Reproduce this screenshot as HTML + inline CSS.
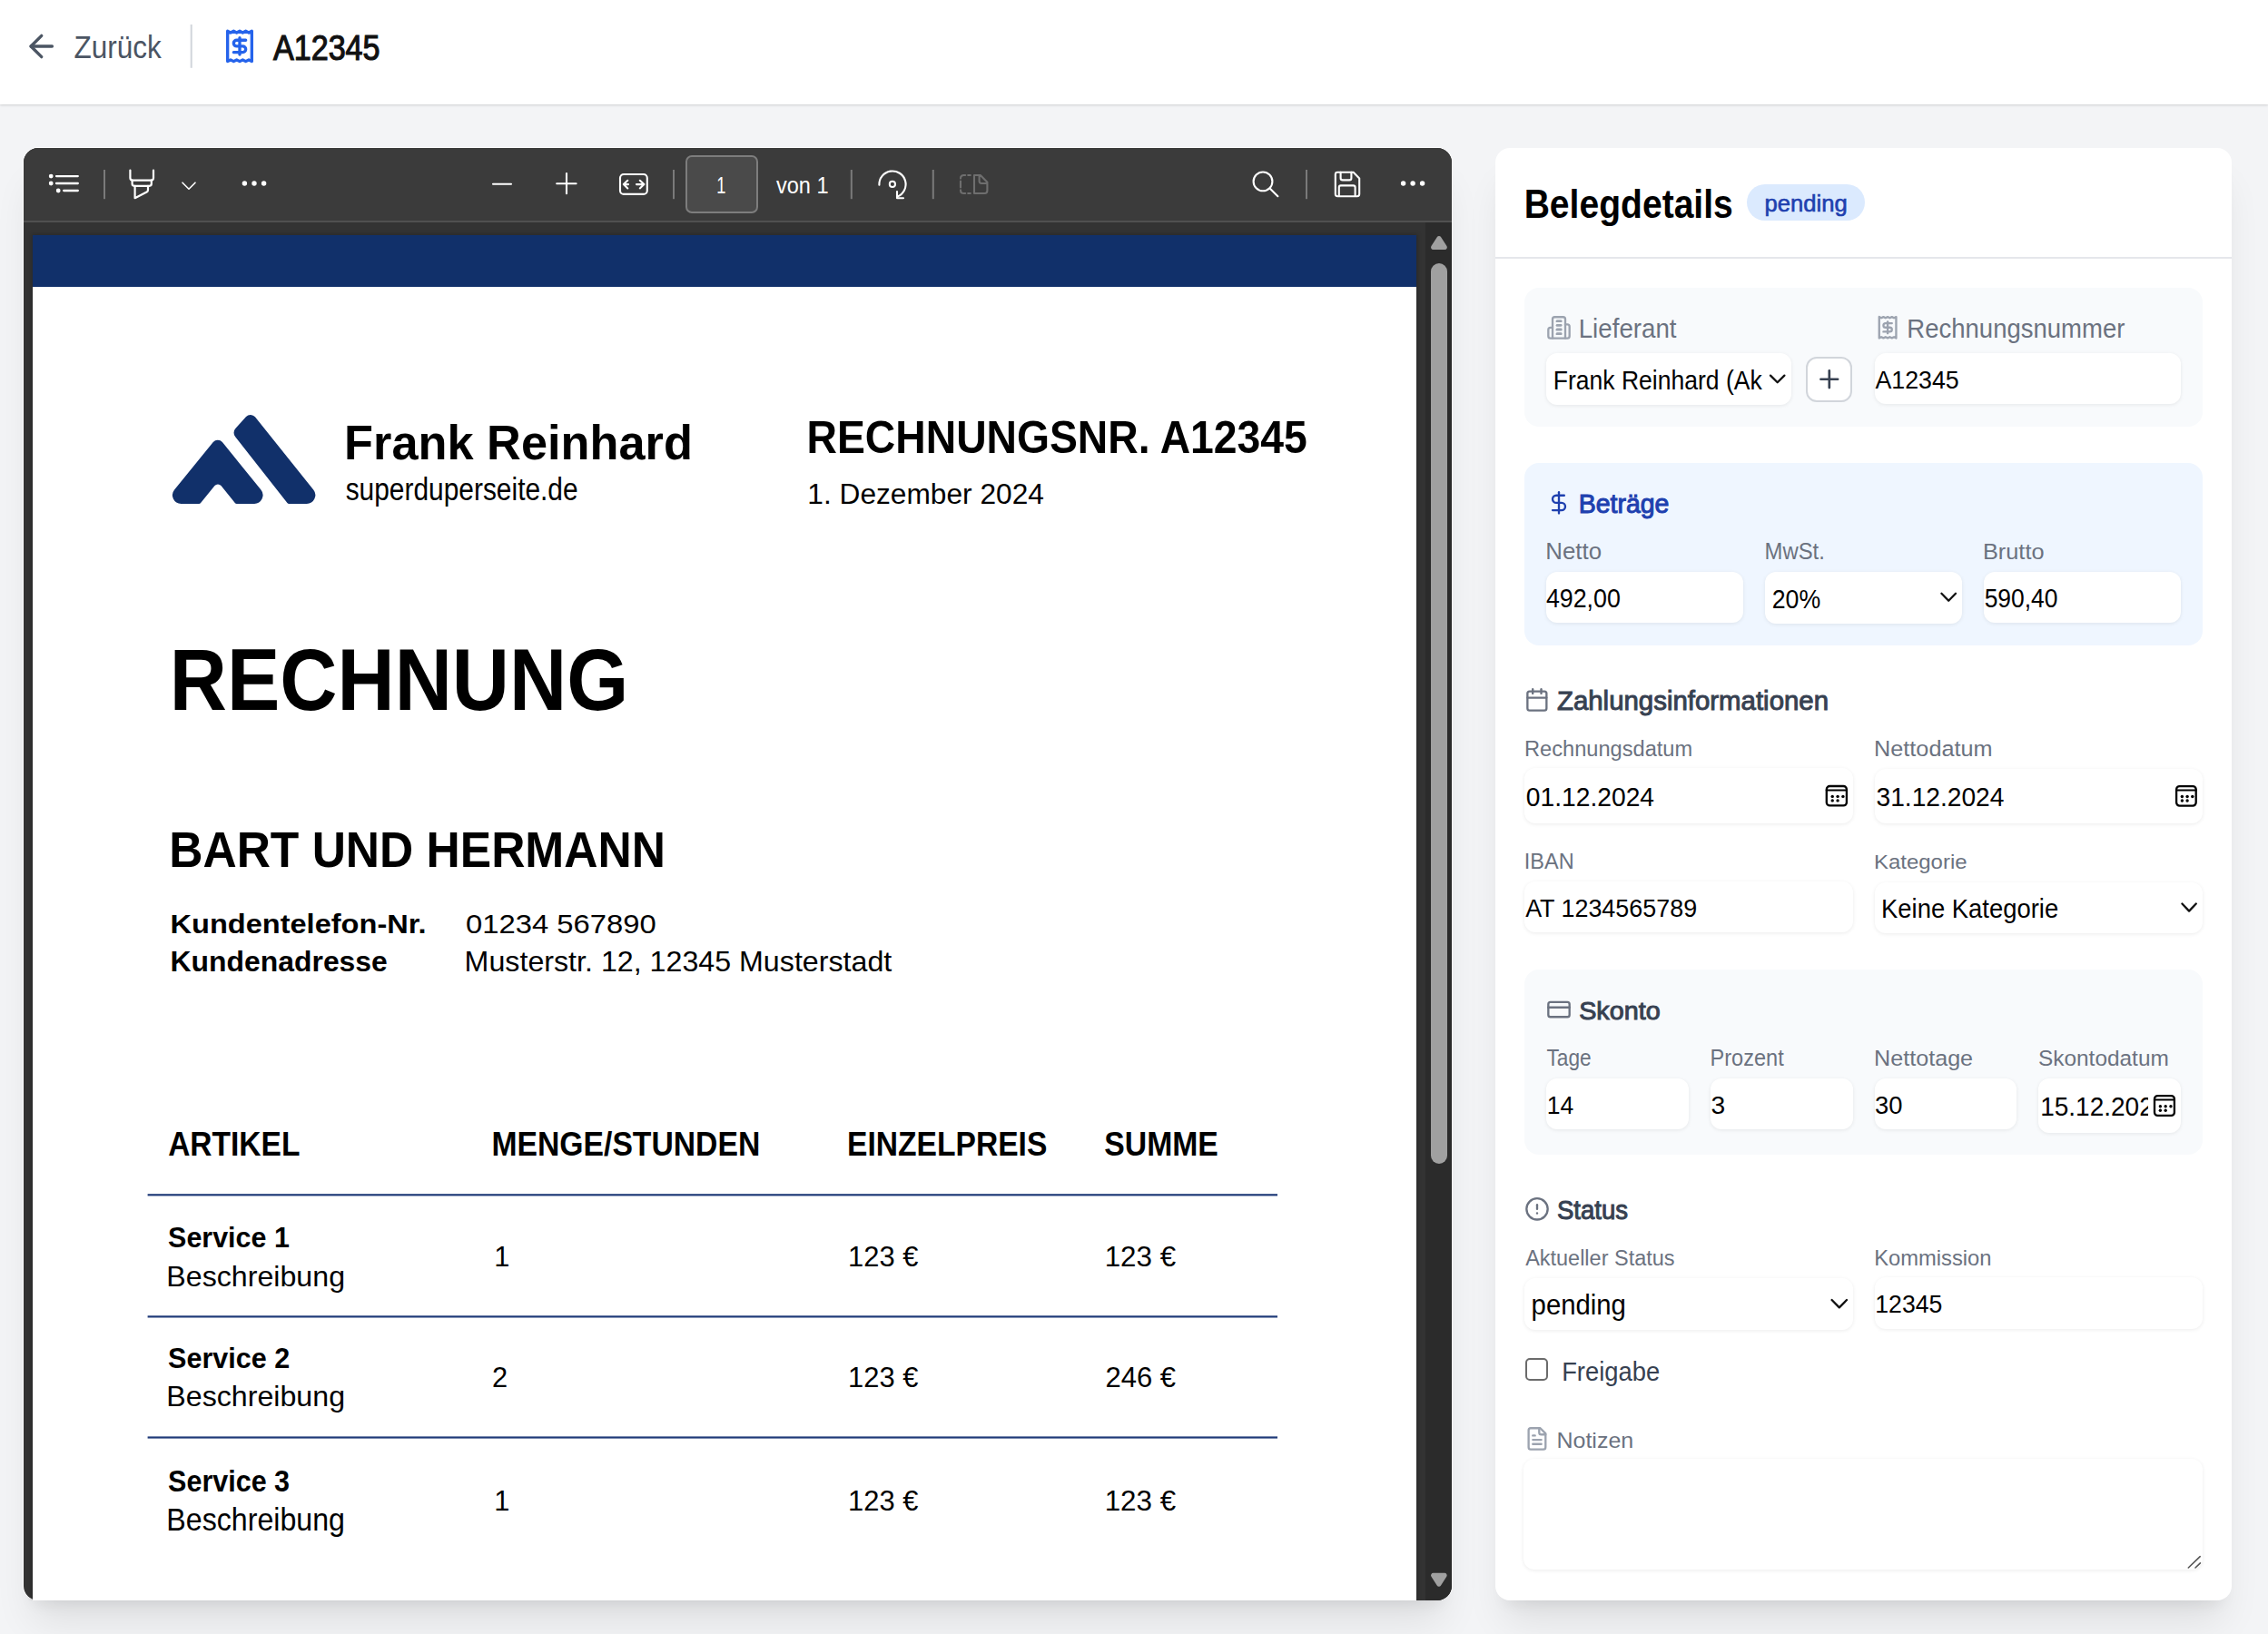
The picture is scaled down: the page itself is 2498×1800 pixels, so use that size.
<!DOCTYPE html>
<html><head><meta charset="utf-8"><title>A12345</title>
<style>
html,body{margin:0;padding:0;}
body{width:2498px;height:1800px;overflow:hidden;background:#f3f4f6;position:relative;font-family:"Liberation Sans", sans-serif;}
svg{position:absolute;left:0;top:0;}
text{font-family:"Liberation Sans", sans-serif;white-space:pre;}
</style></head><body>
<div style="position:absolute;left:0.0px;top:0.0px;width:2498.0px;height:115.0px;background:#fff;box-shadow:0 1px 3px rgba(0,0,0,0.10),0 1px 2px rgba(0,0,0,0.06);"></div>
<div style="position:absolute;left:26.0px;top:163.0px;width:1573.0px;height:1600.0px;background:#333;border-radius:16px;overflow:hidden;box-shadow:1px 0 0 0 #fff,-1px 0 0 0 #fff,0 -1px 0 0 #fff,0 32px 44px -10px rgba(0,0,0,0.09),0 14px 18px -12px rgba(0,0,0,0.09);"></div>
<div style="position:absolute;left:26.0px;top:163.0px;width:1573.0px;height:80.0px;background:#3b3b3b;border-radius:16px 16px 0 0;"></div>
<div style="position:absolute;left:26.0px;top:243.0px;width:1573.0px;height:2.0px;background:#505050;"></div>
<div style="position:absolute;left:36.0px;top:259.0px;width:1524.0px;height:1504.0px;background:#fff;box-shadow:0 0 5px 1px rgba(0,0,0,0.22);clip-path:inset(-12px -12px 0 -12px);"></div>
<div style="position:absolute;left:36.0px;top:259.0px;width:1524.0px;height:57.0px;background:#11306a;"></div>
<div style="position:absolute;left:1570.0px;top:245.0px;width:29.0px;height:1518.0px;background:#2b2b2b;border-bottom-right-radius:16px;"></div>
<div style="position:absolute;left:1576.0px;top:290.4px;width:18.0px;height:991.6px;background:#a0a0a0;border-radius:9px;"></div>
<div style="position:absolute;left:755.2px;top:171.2px;width:79.5px;height:63.6px;background:#4a4a4a;border:2px solid #7d7d7d;border-radius:7px;box-sizing:border-box;"></div>
<div style="position:absolute;left:1647.0px;top:163.0px;width:811.0px;height:1600.0px;background:#fff;border-radius:16px;box-shadow:0 32px 44px -10px rgba(0,0,0,0.09),0 14px 18px -12px rgba(0,0,0,0.09);"></div>
<div style="position:absolute;left:1924.0px;top:203.0px;width:129.5px;height:39.8px;background:#dbeafe;border-radius:20px;"></div>
<div style="position:absolute;left:1647.0px;top:282.7px;width:811.0px;height:2.0px;background:#e5e7eb;"></div>
<div style="position:absolute;left:1679.0px;top:317.0px;width:746.7px;height:152.6px;background:#f8fafc;border-radius:16px;"></div>
<div style="position:absolute;left:1703.0px;top:389.4px;width:270.0px;height:56.4px;background:#fff;border-radius:12px;box-shadow:0 1px 4px rgba(0,0,0,0.08);"></div>
<div style="position:absolute;left:1989.2px;top:392.5px;width:50.8px;height:50.7px;background:#fff;border:2px solid #d1d5db;border-radius:12px;box-sizing:border-box;"></div>
<div style="position:absolute;left:2065.0px;top:389.4px;width:336.8px;height:55.6px;background:#fff;border-radius:12px;box-shadow:0 1px 4px rgba(0,0,0,0.08);"></div>
<div style="position:absolute;left:1679.0px;top:509.7px;width:746.7px;height:201.1px;background:#eff6ff;border-radius:16px;"></div>
<div style="position:absolute;left:1703.0px;top:630.2px;width:217.0px;height:55.5px;background:#fff;border-radius:12px;box-shadow:0 1px 4px rgba(0,0,0,0.08);"></div>
<div style="position:absolute;left:1944.0px;top:630.0px;width:216.8px;height:56.6px;background:#fff;border-radius:12px;box-shadow:0 1px 4px rgba(0,0,0,0.08);"></div>
<div style="position:absolute;left:2185.0px;top:630.3px;width:216.8px;height:55.5px;background:#fff;border-radius:12px;box-shadow:0 1px 4px rgba(0,0,0,0.08);"></div>
<div style="position:absolute;left:1678.8px;top:846.3px;width:362.5px;height:60.4px;background:#fff;border-radius:12px;box-shadow:0 1px 4px rgba(0,0,0,0.08);"></div>
<div style="position:absolute;left:2065.0px;top:847.3px;width:360.7px;height:59.4px;background:#fff;border-radius:12px;box-shadow:0 1px 4px rgba(0,0,0,0.08);"></div>
<div style="position:absolute;left:1678.8px;top:971.1px;width:362.5px;height:55.6px;background:#fff;border-radius:12px;box-shadow:0 1px 4px rgba(0,0,0,0.08);"></div>
<div style="position:absolute;left:2065.0px;top:972.0px;width:360.7px;height:55.9px;background:#fff;border-radius:12px;box-shadow:0 1px 4px rgba(0,0,0,0.08);"></div>
<div style="position:absolute;left:1679.0px;top:1068.0px;width:746.7px;height:203.8px;background:#f8fafc;border-radius:16px;"></div>
<div style="position:absolute;left:1703.0px;top:1188.2px;width:157.0px;height:55.6px;background:#fff;border-radius:12px;box-shadow:0 1px 4px rgba(0,0,0,0.08);"></div>
<div style="position:absolute;left:1884.0px;top:1188.2px;width:157.3px;height:55.6px;background:#fff;border-radius:12px;box-shadow:0 1px 4px rgba(0,0,0,0.08);"></div>
<div style="position:absolute;left:2065.0px;top:1188.0px;width:155.7px;height:55.7px;background:#fff;border-radius:12px;box-shadow:0 1px 4px rgba(0,0,0,0.08);"></div>
<div style="position:absolute;left:2244.9px;top:1188.0px;width:156.9px;height:60.0px;background:#fff;border-radius:12px;box-shadow:0 1px 4px rgba(0,0,0,0.08);"></div>
<div style="position:absolute;left:1678.8px;top:1407.6px;width:362.5px;height:57.8px;background:#fff;border-radius:12px;box-shadow:0 1px 4px rgba(0,0,0,0.08);"></div>
<div style="position:absolute;left:2065.0px;top:1407.3px;width:360.7px;height:56.7px;background:#fff;border-radius:12px;box-shadow:0 1px 4px rgba(0,0,0,0.08);"></div>
<div style="position:absolute;left:1679.7px;top:1496.3px;width:25.0px;height:25.0px;background:#fff;border:2px solid #6b6b6b;border-radius:5px;box-sizing:border-box;"></div>
<div style="position:absolute;left:1678.0px;top:1607.0px;width:748.0px;height:122.0px;background:#fff;border-radius:12px;box-shadow:0 1px 4px rgba(0,0,0,0.08);"></div>
<svg width="2498" height="1800" viewBox="0 0 2498 1800">
<g transform="translate(25.75 31.00) scale(1.6667)" fill="none" stroke="#4b5563" stroke-width="2" stroke-linecap="round" stroke-linejoin="round"><path d="m12 19-7-7 7-7"/><path d="M19 12H5"/></g>
<text x="81.58" y="64.40" font-size="34.45" font-weight="normal" fill="#4b5563" textLength="96.26" lengthAdjust="spacingAndGlyphs">Zurück</text>
<rect x="209.70" y="27.00" width="2.00" height="47.80" rx="0" fill="#d1d5db" stroke="none" stroke-width="0"/>
<g transform="translate(244.00 30.95) scale(1.6667)" fill="none" stroke="#2563eb" stroke-width="2" stroke-linecap="round" stroke-linejoin="round"><path d="M4 2v20l2-1 2 1 2-1 2 1 2-1 2 1 2-1 2 1V2l-2 1-2-1-2 1-2-1-2 1-2-1-2 1Z"/><path d="M16 8h-6a2 2 0 1 0 0 4h4a2 2 0 1 1 0 4H8"/><path d="M12 17.5v-11"/></g>
<text x="300.91" y="65.90" font-size="38.52" font-weight="normal" fill="#111" textLength="117.66" lengthAdjust="spacingAndGlyphs" stroke="#111" stroke-width="1.2">A12345</text>
<path d="M1582.76 261.20 A2.60 2.60 0 0 1 1587.14 261.20 L1593.43 270.99 A2.60 2.60 0 0 1 1591.24 275.00 L1578.66 275.00 A2.60 2.60 0 0 1 1576.47 270.99 Z" fill="#a0a0a0"/>
<path d="M1576.44 1736.80 A2.60 2.60 0 0 1 1578.64 1732.80 L1591.06 1732.80 A2.60 2.60 0 0 1 1593.26 1736.80 L1587.04 1746.55 A2.60 2.60 0 0 1 1582.66 1746.55 Z" fill="#a0a0a0"/>
<circle cx="56.20" cy="194.10" r="2.40" fill="#fff" stroke="none" stroke-width="0"/>
<circle cx="56.20" cy="202.00" r="2.40" fill="#fff" stroke="none" stroke-width="0"/>
<circle cx="64.20" cy="210.00" r="2.40" fill="#fff" stroke="none" stroke-width="0"/>
<path d="M62 194.1 H85.8 M62 202 H85.8 M70.2 210 H85.8" stroke="#ffffff" stroke-width="2.3" fill="none" stroke-linecap="round" stroke-linejoin="round" stroke-linecap="butt"/>
<rect x="114.00" y="187.00" width="2.00" height="32.20" rx="0" fill="#7a7a7a" stroke="none" stroke-width="0"/>
<rect x="741.00" y="187.00" width="2.00" height="32.20" rx="0" fill="#7a7a7a" stroke="none" stroke-width="0"/>
<rect x="936.80" y="187.00" width="2.00" height="32.20" rx="0" fill="#7a7a7a" stroke="none" stroke-width="0"/>
<rect x="1026.80" y="187.00" width="2.00" height="32.20" rx="0" fill="#7a7a7a" stroke="none" stroke-width="0"/>
<rect x="1438.00" y="187.00" width="2.00" height="32.20" rx="0" fill="#7a7a7a" stroke="none" stroke-width="0"/>
<path d="M143.4 187.5 V196 Q143.4 198.6 146 198.6 H166.4 Q169 198.6 169 196 V187.5" stroke="#ffffff" stroke-width="2.2" fill="none" stroke-linecap="round" stroke-linejoin="round"/>
<path d="M145.6 198.6 V202.6 Q145.6 204.8 147.8 204.8 H164.6 Q166.8 204.8 166.8 202.6 V198.6" stroke="#ffffff" stroke-width="2.2" fill="none" stroke-linecap="round" stroke-linejoin="round"/>
<path d="M148.6 204.8 V218.2 L161.6 211.6 Q163 210.8 163 209.2 V204.8" stroke="#ffffff" stroke-width="2.2" fill="none" stroke-linecap="round" stroke-linejoin="round"/>
<path d="M201 201.2 L208 208.2 L215 201.2" stroke="#ffffff" stroke-width="1.6" fill="none" stroke-linecap="round" stroke-linejoin="round"/>
<circle cx="269.40" cy="202.00" r="2.70" fill="#fff" stroke="none" stroke-width="0"/>
<circle cx="280.00" cy="202.00" r="2.70" fill="#fff" stroke="none" stroke-width="0"/>
<circle cx="290.60" cy="202.00" r="2.70" fill="#fff" stroke="none" stroke-width="0"/>
<path d="M543 202.7 H563" stroke="#ffffff" stroke-width="2.1" fill="none" stroke-linecap="round" stroke-linejoin="round" stroke-linecap="butt"/>
<path d="M613.2 202.2 H634.6 M624 191 V213.2" stroke="#ffffff" stroke-width="2.1" fill="none" stroke-linecap="round" stroke-linejoin="round" stroke-linecap="butt"/>
<rect x="683.00" y="192.00" width="29.80" height="21.90" rx="4" fill="none" stroke="#ffffff" stroke-width="2.1"/>
<path d="M692 203.1 H686.8 M691.3 198.8 L686.8 203.1 L691.3 207.4" stroke="#ffffff" stroke-width="2.1" fill="none" stroke-linecap="round" stroke-linejoin="round"/>
<path d="M701 203.1 H709.4 M704.8 198.8 L709.4 203.1 L704.8 207.4" stroke="#ffffff" stroke-width="2.1" fill="none" stroke-linecap="round" stroke-linejoin="round"/>
<text x="789.13" y="213.30" font-size="25.15" font-weight="normal" fill="#fff" textLength="10.16" lengthAdjust="spacingAndGlyphs">1</text>
<text x="854.94" y="213.00" font-size="25.44" font-weight="normal" fill="#fff" textLength="57.61" lengthAdjust="spacingAndGlyphs">von 1</text>
<path d="M968.4 203.8 A14.6 14.6 0 1 1 988.4 216.6" stroke="#ffffff" stroke-width="2.1" fill="none" stroke-linecap="round" stroke-linejoin="round"/>
<path d="M995 218.3 H988 V211" stroke="#ffffff" stroke-width="2.1" fill="none" stroke-linecap="round" stroke-linejoin="round" stroke-linecap="butt" stroke-linejoin="miter"/>
<circle cx="982.90" cy="202.90" r="3.10" fill="none" stroke="#ffffff" stroke-width="2"/>
<path d="M1058 196.6 Q1058 193 1061.6 193 H1063.2 M1066.2 193 H1068.8 M1058 199.6 V206.4 M1058 209.4 Q1058 213 1061.6 213 H1063.2 M1066.2 213 H1068.8" stroke="#6e6e6e" stroke-width="2.1" fill="none" stroke-linecap="round" stroke-linejoin="round" stroke-linecap="butt"/>
<path d="M1073 193 H1079.8 L1087.4 200.8 V210 Q1087.4 213 1084.4 213 H1073 Z M1078.6 193 V199.6 Q1078.6 202 1081 202 H1087.4" stroke="#6e6e6e" stroke-width="2.1" fill="none" stroke-linecap="round" stroke-linejoin="round"/>
<circle cx="1391.00" cy="199.90" r="10.40" fill="none" stroke="#ffffff" stroke-width="2.1"/>
<path d="M1398.6 207.4 L1407.4 216.2" stroke="#ffffff" stroke-width="2.1" fill="none" stroke-linecap="round" stroke-linejoin="round"/>
<path d="M1473.2 189.8 H1490.6 L1497.2 196.4 V213.8 Q1497.2 216.2 1494.8 216.2 H1473.2 Q1470.8 216.2 1470.8 213.8 V192.2 Q1470.8 189.8 1473.2 189.8 Z" stroke="#ffffff" stroke-width="2.1" fill="none" stroke-linecap="round" stroke-linejoin="round"/>
<path d="M1476.6 189.8 V196.2 Q1476.6 198.4 1478.8 198.4 H1486.2 Q1488.4 198.4 1488.4 196.2 V189.8" stroke="#ffffff" stroke-width="2.1" fill="none" stroke-linecap="round" stroke-linejoin="round"/>
<path d="M1474.8 216 V206.4 Q1474.8 204.4 1476.8 204.4 H1490.6 Q1492.6 204.4 1492.6 206.4 V216" stroke="#ffffff" stroke-width="2.1" fill="none" stroke-linecap="round" stroke-linejoin="round"/>
<circle cx="1545.60" cy="202.00" r="2.70" fill="#fff" stroke="none" stroke-width="0"/>
<circle cx="1556.10" cy="202.00" r="2.70" fill="#fff" stroke="none" stroke-width="0"/>
<circle cx="1566.60" cy="202.00" r="2.70" fill="#fff" stroke="none" stroke-width="0"/>
<path d="M234.79 487.07 A6.50 6.50 0 0 1 244.87 487.09 L287.40 539.57 A9.42 9.42 0 0 1 280.09 554.92 L260.72 554.92 A2.50 2.50 0 0 1 258.77 553.99 L243.48 535.10 A4.50 4.50 0 0 0 236.50 535.09 L221.07 554.00 A2.50 2.50 0 0 1 219.13 554.92 L199.47 554.92 A9.51 9.51 0 0 1 192.10 539.40 Z" fill="#11306a"/>
<path d="M259.05 481.07 A7.00 7.00 0 0 1 259.35 472.05 L271.07 459.08 A6.50 6.50 0 0 1 280.97 459.37 L345.21 539.45 A9.52 9.52 0 0 1 337.79 554.92 L318.36 554.92 A2.50 2.50 0 0 1 316.39 553.97 Z" fill="#11306a"/>
<text x="379.07" y="506.20" font-size="53.20" font-weight="bold" fill="#000" textLength="383.85" lengthAdjust="spacingAndGlyphs">Frank Reinhard</text>
<text x="380.68" y="551.30" font-size="34.26" font-weight="normal" fill="#000" textLength="255.95" lengthAdjust="spacingAndGlyphs">superduperseite.de</text>
<text x="888.58" y="498.80" font-size="49.86" font-weight="bold" fill="#000" textLength="551.24" lengthAdjust="spacingAndGlyphs">RECHNUNGSNR. A12345</text>
<text x="889.32" y="555.20" font-size="30.81" font-weight="normal" fill="#000" textLength="260.62" lengthAdjust="spacingAndGlyphs">1. Dezember 2024</text>
<text x="186.79" y="782.00" font-size="96.51" font-weight="bold" fill="#000" textLength="505.51" lengthAdjust="spacingAndGlyphs">RECHNUNG</text>
<text x="186.22" y="955.40" font-size="54.80" font-weight="bold" fill="#000" textLength="546.69" lengthAdjust="spacingAndGlyphs">BART UND HERMANN</text>
<text x="187.50" y="1027.60" font-size="29.94" font-weight="bold" fill="#000" textLength="282.17" lengthAdjust="spacingAndGlyphs">Kundentelefon-Nr.</text>
<text x="512.99" y="1027.60" font-size="29.94" font-weight="normal" fill="#000" textLength="209.66" lengthAdjust="spacingAndGlyphs">01234 567890</text>
<text x="187.55" y="1069.70" font-size="30.52" font-weight="bold" fill="#000" textLength="239.30" lengthAdjust="spacingAndGlyphs">Kundenadresse</text>
<text x="511.64" y="1069.70" font-size="30.52" font-weight="normal" fill="#000" textLength="470.63" lengthAdjust="spacingAndGlyphs">Musterstr. 12, 12345 Musterstadt</text>
<text x="185.16" y="1272.70" font-size="36.63" font-weight="bold" fill="#000" textLength="145.26" lengthAdjust="spacingAndGlyphs">ARTIKEL</text>
<text x="541.53" y="1272.70" font-size="36.63" font-weight="bold" fill="#000" textLength="295.70" lengthAdjust="spacingAndGlyphs">MENGE/STUNDEN</text>
<text x="933.03" y="1272.70" font-size="36.63" font-weight="bold" fill="#000" textLength="220.29" lengthAdjust="spacingAndGlyphs">EINZELPREIS</text>
<text x="1216.29" y="1272.70" font-size="36.63" font-weight="bold" fill="#000" textLength="125.55" lengthAdjust="spacingAndGlyphs">SUMME</text>
<rect x="162.60" y="1315.20" width="1244.40" height="2.20" rx="0" fill="#1f3a78" stroke="none" stroke-width="0"/>
<rect x="162.60" y="1449.30" width="1244.40" height="2.20" rx="0" fill="#1f3a78" stroke="none" stroke-width="0"/>
<rect x="162.60" y="1582.40" width="1244.40" height="2.20" rx="0" fill="#1f3a78" stroke="none" stroke-width="0"/>
<text x="185.09" y="1373.60" font-size="31.69" font-weight="bold" fill="#000" textLength="133.76" lengthAdjust="spacingAndGlyphs">Service 1</text>
<text x="183.35" y="1416.60" font-size="31.69" font-weight="normal" fill="#000" textLength="196.68" lengthAdjust="spacingAndGlyphs">Beschreibung</text>
<text x="544.29" y="1394.80" font-size="30.81" font-weight="normal" fill="#000" textLength="17.14" lengthAdjust="spacingAndGlyphs">1</text>
<text x="934.08" y="1394.80" font-size="30.81" font-weight="normal" fill="#000" textLength="77.30" lengthAdjust="spacingAndGlyphs">123 €</text>
<text x="1216.65" y="1394.80" font-size="30.81" font-weight="normal" fill="#000" textLength="78.44" lengthAdjust="spacingAndGlyphs">123 €</text>
<text x="185.08" y="1507.10" font-size="31.40" font-weight="bold" fill="#000" textLength="134.07" lengthAdjust="spacingAndGlyphs">Service 2</text>
<text x="183.35" y="1549.40" font-size="32.27" font-weight="normal" fill="#000" textLength="196.68" lengthAdjust="spacingAndGlyphs">Beschreibung</text>
<text x="541.96" y="1528.05" font-size="30.81" font-weight="normal" fill="#000" textLength="17.14" lengthAdjust="spacingAndGlyphs">2</text>
<text x="934.08" y="1528.05" font-size="30.81" font-weight="normal" fill="#000" textLength="77.30" lengthAdjust="spacingAndGlyphs">123 €</text>
<text x="1217.45" y="1528.05" font-size="30.81" font-weight="normal" fill="#000" textLength="77.64" lengthAdjust="spacingAndGlyphs">246 €</text>
<text x="185.08" y="1642.90" font-size="32.70" font-weight="bold" fill="#000" textLength="133.99" lengthAdjust="spacingAndGlyphs">Service 3</text>
<text x="183.35" y="1686.10" font-size="34.59" font-weight="normal" fill="#000" textLength="196.68" lengthAdjust="spacingAndGlyphs">Beschreibung</text>
<text x="544.29" y="1663.85" font-size="30.81" font-weight="normal" fill="#000" textLength="17.14" lengthAdjust="spacingAndGlyphs">1</text>
<text x="934.08" y="1663.85" font-size="30.81" font-weight="normal" fill="#000" textLength="77.30" lengthAdjust="spacingAndGlyphs">123 €</text>
<text x="1216.65" y="1663.85" font-size="30.81" font-weight="normal" fill="#000" textLength="78.44" lengthAdjust="spacingAndGlyphs">123 €</text>
<text x="1678.66" y="239.60" font-size="43.90" font-weight="bold" fill="#000" textLength="230.15" lengthAdjust="spacingAndGlyphs">Belegdetails</text>
<text x="1943.54" y="233.00" font-size="25.36" font-weight="normal" fill="#1e40af" textLength="91.11" lengthAdjust="spacingAndGlyphs" stroke="#1e40af" stroke-width="0.6">pending</text>
<g transform="translate(1703.00 346.90) scale(1.1667)" fill="none" stroke="#9ca3af" stroke-width="2" stroke-linecap="round" stroke-linejoin="round"><path d="M6 22V4a2 2 0 0 1 2-2h8a2 2 0 0 1 2 2v18Z"/><path d="M6 12H4a2 2 0 0 0-2 2v6a2 2 0 0 0 2 2h2"/><path d="M18 9h2a2 2 0 0 1 2 2v9a2 2 0 0 1-2 2h-2"/><path d="M10 6h4"/><path d="M10 10h4"/><path d="M10 14h4"/><path d="M10 18h4"/></g>
<path d="M1715 353.6 H1719.4 M1715 358 H1719.4 M1715 362.6 H1719.4 M1715 367.2 H1719.4" stroke="#9ca3af" stroke-width="2" fill="none" stroke-linecap="round" stroke-linejoin="round"/>
<text x="1738.71" y="372.00" font-size="29.94" font-weight="normal" fill="#6b7280" textLength="107.87" lengthAdjust="spacingAndGlyphs">Lieferant</text>
<text x="1710.71" y="429.00" font-size="29.36" font-weight="normal" fill="#000" textLength="229.99" lengthAdjust="spacingAndGlyphs">Frank Reinhard (Ak</text>
<path d="M1950 413.6 L1957.7 421.3 L1965.4 413.6" stroke="#111" stroke-width="2.3" fill="none" stroke-linecap="round" stroke-linejoin="round"/>
<g transform="translate(1998.80 401.75) scale(1.3333)" fill="none" stroke="#374151" stroke-width="2" stroke-linecap="round" stroke-linejoin="round"><path d="M5 12h14"/><path d="M12 5v14"/></g>
<g transform="translate(2065.10 346.75) scale(1.1667)" fill="none" stroke="#9ca3af" stroke-width="2" stroke-linecap="round" stroke-linejoin="round"><path d="M4 2v20l2-1 2 1 2-1 2 1 2-1 2 1 2-1 2 1V2l-2 1-2-1-2 1-2-1-2 1-2-1-2 1Z"/><path d="M16 8h-6a2 2 0 1 0 0 4h4a2 2 0 1 1 0 4H8"/><path d="M12 17.5v-11"/></g>
<text x="2100.33" y="372.00" font-size="29.94" font-weight="normal" fill="#6b7280" textLength="240.06" lengthAdjust="spacingAndGlyphs">Rechnungsnummer</text>
<text x="2065.43" y="427.80" font-size="27.62" font-weight="normal" fill="#000" textLength="92.35" lengthAdjust="spacingAndGlyphs">A12345</text>
<g transform="translate(1703.00 539.90) scale(1.1667)" fill="none" stroke="#1e40af" stroke-width="2" stroke-linecap="round" stroke-linejoin="round"><line x1="12" x2="12" y1="2" y2="22"/><path d="M17 5H9.5a3.5 3.5 0 0 0 0 7h5a3.5 3.5 0 0 1 0 7H6"/></g>
<text x="1738.65" y="565.30" font-size="28.78" font-weight="normal" fill="#1e40af" textLength="99.76" lengthAdjust="spacingAndGlyphs" stroke="#1e40af" stroke-width="1.0">Beträge</text>
<text x="1702.27" y="616.00" font-size="25.00" font-weight="normal" fill="#6b7280" textLength="61.77" lengthAdjust="spacingAndGlyphs">Netto</text>
<text x="1943.53" y="616.00" font-size="25.00" font-weight="normal" fill="#6b7280" textLength="66.33" lengthAdjust="spacingAndGlyphs">MwSt.</text>
<text x="2183.91" y="616.20" font-size="24.42" font-weight="normal" fill="#6b7280" textLength="67.62" lengthAdjust="spacingAndGlyphs">Brutto</text>
<text x="1702.90" y="669.00" font-size="29.07" font-weight="normal" fill="#000" textLength="81.94" lengthAdjust="spacingAndGlyphs">492,00</text>
<text x="1951.66" y="669.70" font-size="28.63" font-weight="normal" fill="#000" textLength="53.51" lengthAdjust="spacingAndGlyphs">20%</text>
<path d="M2138.4 653.8 L2146.2 661.8 L2154 653.8" stroke="#111" stroke-width="2.3" fill="none" stroke-linecap="round" stroke-linejoin="round"/>
<text x="2185.64" y="668.70" font-size="28.92" font-weight="normal" fill="#000" textLength="80.88" lengthAdjust="spacingAndGlyphs">590,40</text>
<g transform="translate(1678.85 756.90) scale(1.1667)" fill="none" stroke="#6b7280" stroke-width="2" stroke-linecap="round" stroke-linejoin="round"><path d="M8 2v4"/><path d="M16 2v4"/><rect width="18" height="18" x="3" y="4" rx="2"/><path d="M3 10h18"/></g>
<text x="1714.94" y="782.30" font-size="30.23" font-weight="normal" fill="#374151" textLength="299.11" lengthAdjust="spacingAndGlyphs" stroke="#374151" stroke-width="1.0">Zahlungsinformationen</text>
<text x="1679.05" y="832.60" font-size="24.42" font-weight="normal" fill="#6b7280" textLength="185.11" lengthAdjust="spacingAndGlyphs">Rechnungsdatum</text>
<text x="2064.12" y="833.00" font-size="23.55" font-weight="normal" fill="#6b7280" textLength="130.41" lengthAdjust="spacingAndGlyphs">Nettodatum</text>
<rect x="2011.80" y="866.00" width="22.10" height="21.40" rx="3.5" fill="none" stroke="#000" stroke-width="2.3"/>
<path d="M2011.70 870.50 H2034.00" stroke="#000" stroke-width="2" fill="none" stroke-linecap="round" stroke-linejoin="round"/>
<circle cx="2018.23" cy="877.41" r="1.70" fill="#000" stroke="none" stroke-width="0"/>
<circle cx="2024.07" cy="877.41" r="1.70" fill="#000" stroke="none" stroke-width="0"/>
<circle cx="2029.90" cy="877.41" r="1.70" fill="#000" stroke="none" stroke-width="0"/>
<circle cx="2018.23" cy="881.89" r="1.70" fill="#000" stroke="none" stroke-width="0"/>
<circle cx="2024.07" cy="881.89" r="1.70" fill="#000" stroke="none" stroke-width="0"/>
<rect x="2397.10" y="866.10" width="21.60" height="21.50" rx="3.5" fill="none" stroke="#000" stroke-width="2.3"/>
<path d="M2397.00 870.60 H2418.80" stroke="#000" stroke-width="2" fill="none" stroke-linecap="round" stroke-linejoin="round"/>
<circle cx="2403.38" cy="877.56" r="1.70" fill="#000" stroke="none" stroke-width="0"/>
<circle cx="2409.09" cy="877.56" r="1.70" fill="#000" stroke="none" stroke-width="0"/>
<circle cx="2414.80" cy="877.56" r="1.70" fill="#000" stroke="none" stroke-width="0"/>
<circle cx="2403.38" cy="882.06" r="1.70" fill="#000" stroke="none" stroke-width="0"/>
<circle cx="2409.09" cy="882.06" r="1.70" fill="#000" stroke="none" stroke-width="0"/>
<text x="1680.87" y="887.80" font-size="28.92" font-weight="normal" fill="#000" textLength="141.21" lengthAdjust="spacingAndGlyphs">01.12.2024</text>
<text x="2066.54" y="887.70" font-size="28.63" font-weight="normal" fill="#000" textLength="140.83" lengthAdjust="spacingAndGlyphs">31.12.2024</text>
<text x="1678.83" y="957.00" font-size="24.27" font-weight="normal" fill="#6b7280" textLength="54.78" lengthAdjust="spacingAndGlyphs">IBAN</text>
<text x="2064.02" y="956.60" font-size="22.67" font-weight="normal" fill="#6b7280" textLength="102.51" lengthAdjust="spacingAndGlyphs">Kategorie</text>
<text x="1680.13" y="1010.00" font-size="28.34" font-weight="normal" fill="#000" textLength="188.98" lengthAdjust="spacingAndGlyphs">AT 1234565789</text>
<text x="2072.04" y="1010.80" font-size="29.07" font-weight="normal" fill="#000" textLength="195.17" lengthAdjust="spacingAndGlyphs">Keine Kategorie</text>
<path d="M2403.4 995.5 L2411.1 1003.6 L2418.8 995.5" stroke="#111" stroke-width="2.3" fill="none" stroke-linecap="round" stroke-linejoin="round"/>
<g transform="translate(1703.00 1098.05) scale(1.1667)" fill="none" stroke="#6b7280" stroke-width="2" stroke-linecap="round" stroke-linejoin="round"><rect width="20" height="14" x="2" y="5" rx="2"/><line x1="2" x2="22" y1="10" y2="10"/></g>
<text x="1739.21" y="1122.60" font-size="28.20" font-weight="normal" fill="#374151" textLength="89.47" lengthAdjust="spacingAndGlyphs" stroke="#374151" stroke-width="1.0">Skonto</text>
<text x="1703.49" y="1174.10" font-size="24.86" font-weight="normal" fill="#6b7280" textLength="49.20" lengthAdjust="spacingAndGlyphs">Tage</text>
<text x="1883.56" y="1174.10" font-size="24.86" font-weight="normal" fill="#6b7280" textLength="81.15" lengthAdjust="spacingAndGlyphs">Prozent</text>
<text x="2064.13" y="1173.50" font-size="23.84" font-weight="normal" fill="#6b7280" textLength="108.98" lengthAdjust="spacingAndGlyphs">Nettotage</text>
<text x="2245.00" y="1173.50" font-size="23.84" font-weight="normal" fill="#6b7280" textLength="143.79" lengthAdjust="spacingAndGlyphs">Skontodatum</text>
<text x="1703.81" y="1226.70" font-size="28.20" font-weight="normal" fill="#000" textLength="29.48" lengthAdjust="spacingAndGlyphs">14</text>
<text x="1884.44" y="1226.70" font-size="28.20" font-weight="normal" fill="#000" textLength="15.68" lengthAdjust="spacingAndGlyphs">3</text>
<text x="2064.97" y="1227.00" font-size="27.62" font-weight="normal" fill="#000" textLength="30.41" lengthAdjust="spacingAndGlyphs">30</text>
<clipPath id="clipsk"><rect x="2244" y="1188" width="122" height="60"/></clipPath>
<text x="2247.20" y="1229.00" font-size="28.63" font-weight="normal" fill="#000" textLength="140.08" lengthAdjust="spacingAndGlyphs" clip-path="url(#clipsk)">15.12.2024</text>
<rect x="2373.00" y="1207.10" width="21.90" height="21.80" rx="3.5" fill="none" stroke="#000" stroke-width="2.3"/>
<path d="M2372.90 1211.60 H2395.00" stroke="#000" stroke-width="2" fill="none" stroke-linecap="round" stroke-linejoin="round"/>
<circle cx="2379.37" cy="1218.72" r="1.70" fill="#000" stroke="none" stroke-width="0"/>
<circle cx="2385.16" cy="1218.72" r="1.70" fill="#000" stroke="none" stroke-width="0"/>
<circle cx="2390.94" cy="1218.72" r="1.70" fill="#000" stroke="none" stroke-width="0"/>
<circle cx="2379.37" cy="1223.28" r="1.70" fill="#000" stroke="none" stroke-width="0"/>
<circle cx="2385.16" cy="1223.28" r="1.70" fill="#000" stroke="none" stroke-width="0"/>
<g transform="translate(1679.00 1317.80) scale(1.1667)" fill="none" stroke="#6b7280" stroke-width="2" stroke-linecap="round" stroke-linejoin="round"><circle cx="12" cy="12" r="10"/><line x1="12" x2="12" y1="8" y2="12"/><line x1="12" x2="12.01" y1="16" y2="16"/></g>
<text x="1714.96" y="1342.90" font-size="28.92" font-weight="normal" fill="#374151" textLength="78.21" lengthAdjust="spacingAndGlyphs" stroke="#374151" stroke-width="1.0">Status</text>
<text x="1680.14" y="1394.00" font-size="24.42" font-weight="normal" fill="#6b7280" textLength="164.41" lengthAdjust="spacingAndGlyphs">Aktueller Status</text>
<text x="2064.24" y="1393.50" font-size="23.84" font-weight="normal" fill="#6b7280" textLength="129.26" lengthAdjust="spacingAndGlyphs">Kommission</text>
<text x="1686.60" y="1447.80" font-size="31.04" font-weight="normal" fill="#000" textLength="104.29" lengthAdjust="spacingAndGlyphs">pending</text>
<path d="M2017.6 1432 L2025.8 1440.4 L2034 1432" stroke="#111" stroke-width="2.3" fill="none" stroke-linecap="round" stroke-linejoin="round"/>
<text x="2065.30" y="1446.40" font-size="28.20" font-weight="normal" fill="#000" textLength="73.98" lengthAdjust="spacingAndGlyphs">12345</text>
<text x="1720.14" y="1520.50" font-size="30.09" font-weight="normal" fill="#374151" textLength="108.08" lengthAdjust="spacingAndGlyphs">Freigabe</text>
<g transform="translate(1678.95 1570.90) scale(1.1667)" fill="none" stroke="#9ca3af" stroke-width="2" stroke-linecap="round" stroke-linejoin="round"><path d="M15 2H6a2 2 0 0 0-2 2v16a2 2 0 0 0 2 2h12a2 2 0 0 0 2-2V7Z"/><path d="M14 2v4a2 2 0 0 0 2 2h4"/><path d="M10 9H8"/><path d="M16 13H8"/><path d="M16 17H8"/></g>
<text x="1714.54" y="1595.00" font-size="24.71" font-weight="normal" fill="#6b7280" textLength="84.64" lengthAdjust="spacingAndGlyphs">Notizen</text>
<path d="M2410.3 1727 L2423.2 1714.7 M2418 1727 L2423.4 1721.8" stroke="#555" stroke-width="1.6" fill="none" stroke-linecap="round" stroke-linejoin="round"/>
</svg>
</body></html>
